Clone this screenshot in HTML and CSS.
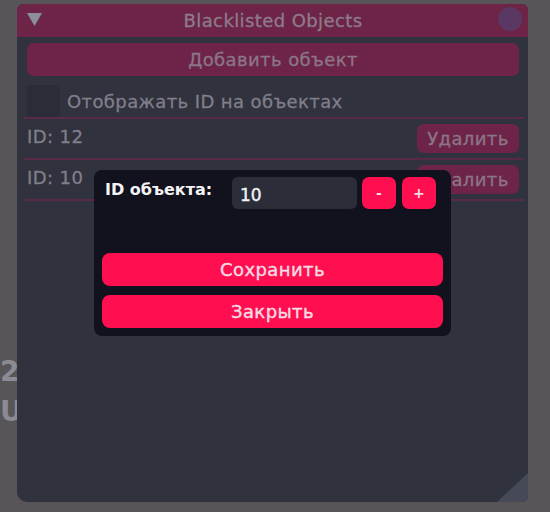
FILE: index.html
```html
<!DOCTYPE html>
<html lang="en">

<head>
    <meta charset="UTF-8">
    <title>Blacklisted Objects</title>
    <link rel="stylesheet" href="styles.css">
</head>

<body>
    <div class="bg-text">
        <span>2</span>
        <span>U</span>
    </div>

    <div class="window">
        <div class="title-bar">
            <svg class="collapse" width="15" height="14" viewBox="0 0 15 14">
                <polygon points="0,0 15,0 7.5,13" fill="#8b8f99" />
            </svg>
            <div class="title">Blacklisted Objects</div>
            <div class="close-dot"></div>
        </div>

        <div class="content">
            <button class="btn-dim btn-wide">Добавить объект</button>

            <label class="check-row">
                <span class="checkbox"></span>
                <span>Отображать ID на объектах</span>
            </label>

            <div class="separator"></div>

            <div class="item-row">
                <span class="item-id">ID: 12</span>
                <button class="btn-dim btn-delete">Удалить</button>
            </div>
            <div class="separator"></div>

            <div class="item-row">
                <span class="item-id">ID: 10</span>
                <button class="btn-dim btn-delete">Удалить</button>
            </div>
            <div class="separator"></div>
        </div>

        <div class="resize-grip"></div>

        <div class="popup">
            <div class="popup-row">
                <span class="popup-label">ID объекта:</span>
                <input class="popup-input" type="text" value="10">
                <button class="btn-red btn-step">-</button>
                <button class="btn-red btn-step">+</button>
            </div>
            <div class="popup-actions">
                <button class="btn-red btn-action">Сохранить</button>
                <button class="btn-red btn-action">Закрыть</button>
            </div>
        </div>
    </div>
</body>

</html>
```

FILE: styles.css
```css
* {
    margin: 0;
    padding: 0;
    box-sizing: border-box;
}

body {
    font-family: 'DejaVu Sans', sans-serif;
    background-color: #585558;
    color: #817e8a;
    width: 550px;
    height: 512px;
    overflow: hidden;
    padding: 4px 0 0 17px;
    position: relative;
}

/* text of the scene behind the window */
.bg-text {
    position: absolute;
    left: 0;
    top: 352px;
    display: flex;
    flex-direction: column;
    font-weight: bold;
    font-size: 28px;
    line-height: 40px;
    color: #8c8a93;
}

.window {
    position: relative;
    width: 511px;
    height: 498px;
    background: #30323e;
    border-radius: 6px 6px 6px 10px;
    overflow: hidden;
    font-size: 18px;
    letter-spacing: 0.4px;
    -webkit-text-stroke: 0.3px currentColor;
}

.title-bar {
    height: 33px;
    background: #6d2447;
    display: flex;
    align-items: center;
    padding: 0 6px 0 10px;
}

.collapse {
    flex: none;
    margin-top: -2px;
}

.title {
    flex: 1;
    text-align: center;
    color: #8d7b8b;
    padding-left: 6px;
}

.close-dot {
    width: 24px;
    height: 24px;
    border-radius: 50%;
    background: #5b3864;
    margin-top: -4px;
}

.content {
    padding: 6px 9px 0 10px;
    display: flex;
    flex-direction: column;
}

button {
    font-family: 'DejaVu Sans', sans-serif;
    font-size: 18px;
    letter-spacing: 0.4px;
    border: none;
    cursor: pointer;
}

.btn-dim {
    background: #6e2449;
    color: #8a7686;
    border-radius: 7px;
}

.btn-wide {
    height: 33px;
}

.check-row {
    display: flex;
    align-items: center;
    gap: 7px;
    margin-top: 9px;
}

.checkbox {
    width: 33px;
    height: 32px;
    background: #2a2c37;
    border-radius: 3px;
}

.separator {
    height: 2px;
    background: #59294a;
    margin: 0 -5px 0 -3px;
}

.item-row {
    display: flex;
    justify-content: space-between;
    align-items: center;
    height: 39px;
}

.item-id {
    margin-bottom: 4px;
}

.btn-delete {
    width: 102px;
    height: 29px;
    margin-bottom: 1px;
}

.resize-grip {
    position: absolute;
    right: 0;
    bottom: 0;
    width: 31px;
    height: 29px;
    background: #464957;
    clip-path: polygon(100% 0, 100% 100%, 0 100%);
}

.popup {
    position: absolute;
    left: 77px;
    top: 166px;
    width: 357px;
    height: 166px;
    background: #11121d;
    border-radius: 8px;
    padding: 7px 15px 8px 8px;
    display: flex;
    flex-direction: column;
    justify-content: space-between;
    letter-spacing: 0;
    -webkit-text-stroke: 0;
}

.popup-row {
    display: flex;
    align-items: center;
    height: 32px;
}

.popup-label {
    font-weight: bold;
    font-size: 16px;
    color: #f4f4f6;
    padding-left: 3px;
    width: 130px;
    margin-top: -7px;
}

.popup-input {
    width: 125px;
    height: 32px;
    background: #2b2d39;
    border: none;
    border-radius: 6px;
    color: #f2f2f4;
    font-family: 'DejaVu Sans', sans-serif;
    font-size: 17px;
    -webkit-text-stroke: 0.4px #f2f2f4;
    padding: 4px 0 0 8px;
    outline: none;
}

.btn-red {
    background: #ff0f4f;
    color: #f6dbe4;
}

.btn-step {
    width: 34px;
    height: 32px;
    border-radius: 7px;
    margin-left: 6px;
    font-size: 14px;
    font-weight: bold;
}

.popup-row .btn-step:first-of-type {
    margin-left: 5px;
}

.popup-actions {
    display: flex;
    flex-direction: column;
    gap: 9px;
    margin-right: -7px;
}

.btn-action {
    height: 33px;
    border-radius: 8px;
    -webkit-text-stroke: 0.4px #f6dbe4;
}
```
